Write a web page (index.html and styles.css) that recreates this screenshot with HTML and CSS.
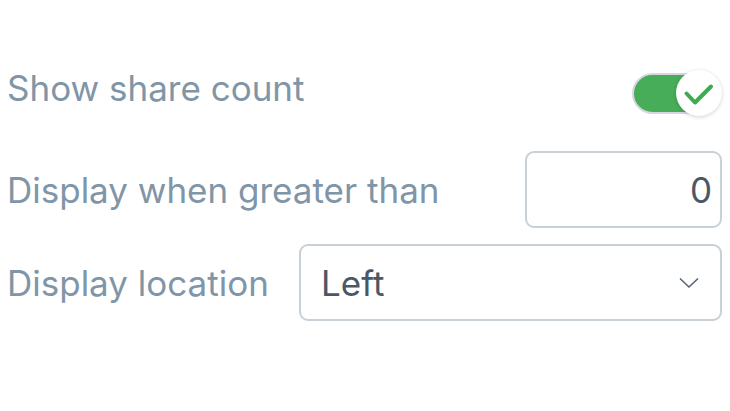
FILE: index.html
```html
<!DOCTYPE html>
<html lang="en">
<head>
    <meta charset="UTF-8">
    <meta name="viewport" content="width=device-width, initial-scale=1.0">
    <title>Share count settings</title>
    <link rel="stylesheet" href="styles.css">
</head>
<body>
    <div class="settings">
        <div class="row row-toggle">
            <span class="label label-top">Show share count</span>
            <div class="toggle">
                <div class="toggle-track"></div>
                <div class="toggle-knob">
                    <svg width="46" height="46" viewBox="0 0 46 46">
                        <path d="M10.5 23.5l8.5 9L35 16.5" fill="none" stroke="#3dab50" stroke-width="4" stroke-linecap="round" stroke-linejoin="round"/>
                    </svg>
                </div>
            </div>
        </div>
        <div class="row row-number">
            <span class="label">Display when greater than</span>
            <div class="field field-number">0</div>
        </div>
        <div class="row row-select">
            <span class="label">Display location</span>
            <div class="field field-select">
                <span>Left</span>
                <svg width="20" height="12" viewBox="0 0 20 12">
                    <path d="M1.5 2l8.5 8 8.5-8" fill="none" stroke="#5b6875" stroke-width="1.7" stroke-linecap="round" stroke-linejoin="round"/>
                </svg>
            </div>
        </div>
    </div>
</body>
</html>
```

FILE: styles.css
```css
body {
    margin: 0;
    background-color: #fff;
    font-family: Inter, "Open Sans", sans-serif;
}
.settings {
    padding: 68px 8px 0 7px;
    display: flex;
    flex-direction: column;
}
.row {
    display: flex;
    align-items: center;
    justify-content: space-between;
}
.label {
    font-size: 35px;
    color: #8096a8;
}
.label-top {
    margin-bottom: 11px;
}
.row-toggle {
    height: 50px;
}
.row-number {
    margin-top: 33px;
}
.row-select {
    margin-top: 16px;
}
.toggle {
    position: relative;
    width: 90px;
    height: 47px;
}
.toggle-track {
    position: absolute;
    left: 0;
    top: 3px;
    width: 80px;
    height: 41px;
    box-sizing: border-box;
    border-radius: 21px;
    background-color: #47ad58;
    border: 2px solid #d6d5e2;
}
.toggle-knob {
    position: absolute;
    right: 0;
    top: 0;
    width: 46px;
    height: 46px;
    border-radius: 50%;
    background-color: #fff;
    box-shadow: 0 1px 4px rgba(0, 0, 0, 0.18);
}
.toggle-knob svg {
    display: block;
}
.field {
    box-sizing: border-box;
    height: 77px;
    border: 2px solid #c9d0d6;
    border-radius: 9px;
    font-size: 35px;
    color: #4a5866;
    display: flex;
    align-items: center;
}
.field-number {
    width: 197px;
    justify-content: flex-end;
    padding-right: 8px;
}
.field-select {
    width: 423px;
    justify-content: space-between;
    padding: 0 21px 0 20px;
}
```
